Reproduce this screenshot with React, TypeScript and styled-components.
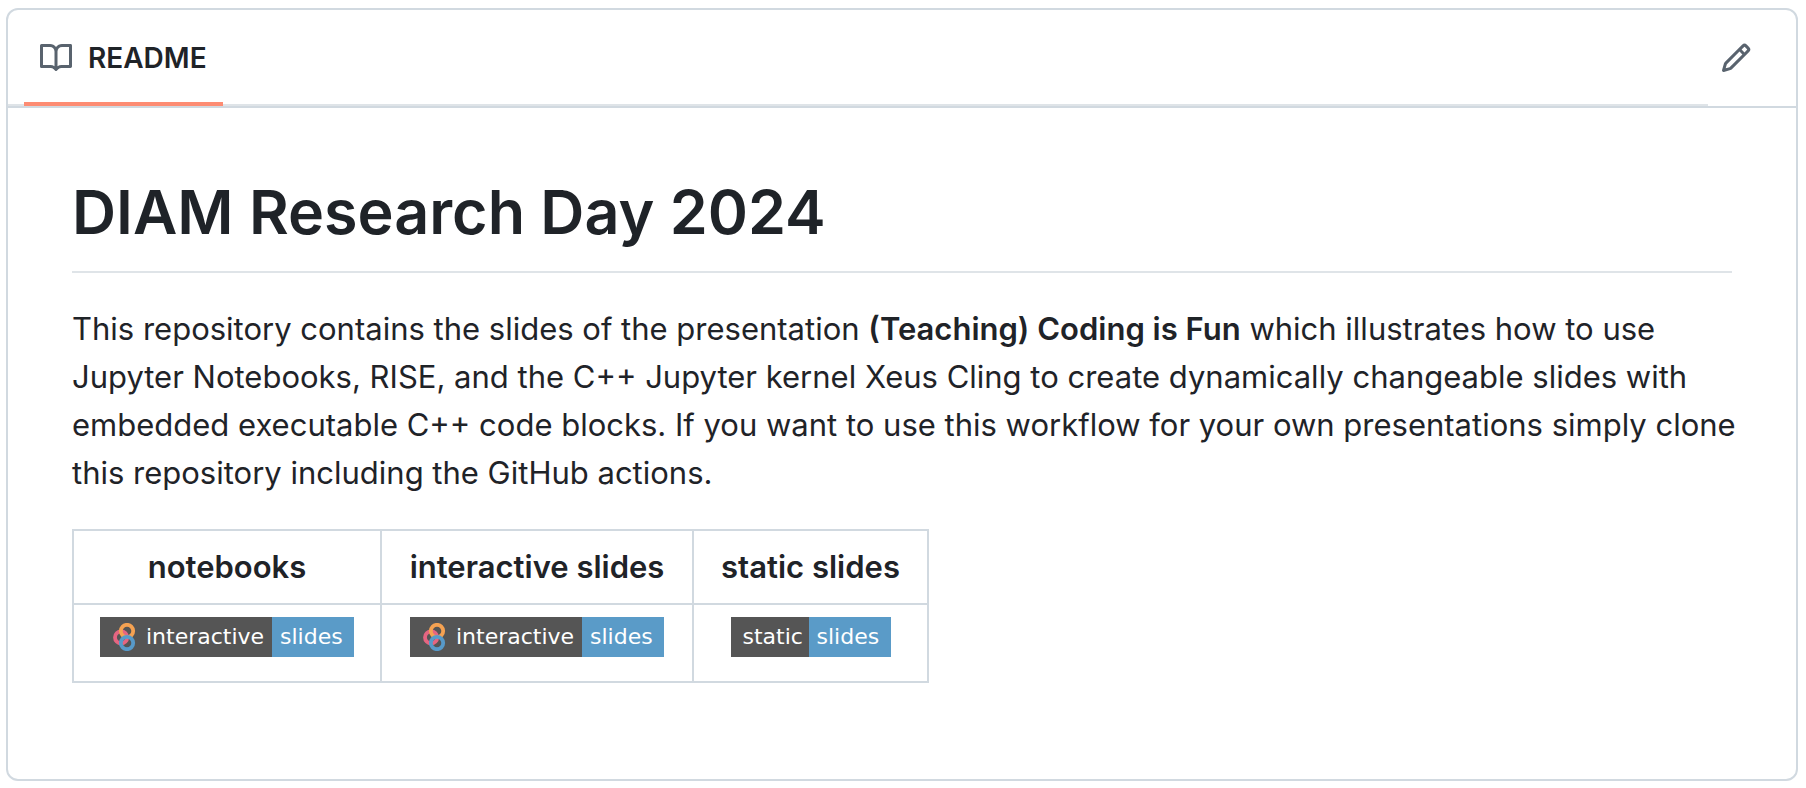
import React from "react";
import styled, { createGlobalStyle } from "styled-components";

const line = "#d1d9e0";
const ink = "#1f2328";
const muted = "#59636e";

const GlobalStyle = createGlobalStyle`
  *, *::before, *::after { box-sizing: border-box; }
  body {
    margin: 0;
    background: #fff;
    color: ${ink};
    font-family: Inter, "Liberation Sans", sans-serif;
    font-size: 31px;
    line-height: 48px;
  }
`;

const Page = styled.main`
  padding: 8px 8px 7px 6px;
`;

const Card = styled.section`
  border: 2px solid ${line};
  border-radius: 12px;
  background: #fff;
`;

const Header = styled.header`
  display: flex;
  align-items: center;
  padding-right: 32px;
  border-bottom: 2px solid ${line};
`;

const Tabs = styled.nav`
  flex: 1;
  display: flex;
  height: 96px;
  padding-left: 16px;
  box-shadow: inset 0 -2px #dfe4e8;
`;

const Tab = styled.a`
  display: flex;
  align-items: center;
  gap: 16px;
  padding: 0 16px;
  color: ${ink};
  font-size: 28px;
  font-weight: 600;
  text-decoration: none;
  box-shadow: inset 0 -4px #fd8c73;
`;

const Icon = styled.svg`
  display: block;
  width: 32px;
  height: 32px;
  fill: ${muted};
`;

const IconButton = styled.button`
  display: flex;
  align-items: center;
  justify-content: center;
  width: 56px;
  height: 56px;
  padding: 0;
  border: 0;
  border-radius: 12px;
  background: transparent;
  cursor: pointer;
`;

const Article = styled.article`
  padding: 64px 64px 96px;
`;

const Title = styled.h1`
  margin: 0 0 32px;
  padding-bottom: 19px;
  border-bottom: 2px solid #dfe4e8;
  font-size: 61px;
  font-weight: 600;
  line-height: 80px;
`;

const Paragraph = styled.p`
  margin: 0 -12px 32px 0;
`;

const Strong = styled.strong`
  font-weight: 600;
`;

const Table = styled.table`
  border-collapse: collapse;
  table-layout: fixed;
  width: 857px;
`;

const Column = styled.col<{ $width: number }>`
  width: ${(p) => p.$width}px;
`;

const HeadCell = styled.th`
  padding: 12px 0;
  border: 2px solid ${line};
  font-weight: 600;
  white-space: nowrap;
`;

const Cell = styled.td`
  padding: 12px 0 24px;
  border: 2px solid ${line};
`;

const Badge = styled.a`
  display: flex;
  width: fit-content;
  margin: 0 auto;
  color: #fff;
  font-family: Verdana, "DejaVu Sans", sans-serif;
  font-size: 22px;
  line-height: 40px;
  text-decoration: none;
`;

const BadgeLabel = styled.span<{ $width: number }>`
  display: flex;
  align-items: center;
  gap: 8px;
  width: ${(p) => p.$width}px;
  padding-left: 12px;
  background: #555;
`;

const BadgeValue = styled.span`
  width: 82px;
  padding-left: 8px;
  background: #5a9bc8;
`;

const BinderLogo = styled.svg`
  display: block;
  width: 26px;
  height: 28px;
  fill: none;
  stroke-width: 3.8;
`;

function BookIcon() {
  return (
    <Icon viewBox="0 0 16 16" aria-hidden="true">
      <path d="M0 1.75A.75.75 0 0 1 .75 1h4.253c1.227 0 2.317.59 3 1.501A3.743 3.743 0 0 1 11.006 1h4.245a.75.75 0 0 1 .75.75v10.5a.75.75 0 0 1-.75.75h-4.507a2.25 2.25 0 0 0-1.591.659l-.622.621a.75.75 0 0 1-1.06 0l-.622-.621A2.25 2.25 0 0 0 5.258 13H.75a.75.75 0 0 1-.75-.75Zm7.251 10.324.004-5.073-.002-2.253A2.25 2.25 0 0 0 5.003 2.5H1.5v9h3.757a3.75 3.75 0 0 1 1.994.574ZM8.755 4.75l-.004 7.322a3.752 3.752 0 0 1 1.992-.572H14.5v-9h-3.495a2.25 2.25 0 0 0-2.25 2.25Z" />
    </Icon>
  );
}

function PencilIcon() {
  return (
    <Icon viewBox="0 0 16 16" aria-hidden="true">
      <path d="M11.013 1.427a1.75 1.75 0 0 1 2.474 0l1.086 1.086a1.75 1.75 0 0 1 0 2.474l-8.61 8.61c-.21.21-.47.364-.756.445l-3.251.93a.75.75 0 0 1-.927-.928l.929-3.25c.081-.286.235-.547.445-.758l8.61-8.61Zm.176 4.823L9.75 4.81l-6.286 6.287a.253.253 0 0 0-.064.108l-.558 1.953 1.953-.558a.253.253 0 0 0 .108-.064Zm1.238-3.763a.25.25 0 0 0-.354 0L10.811 3.75l1.439 1.44 1.263-1.263a.25.25 0 0 0 0-.354Z" />
    </Icon>
  );
}

function InteractiveBadge() {
  return (
    <Badge href="#interactive">
      <BadgeLabel $width={172}>
        <BinderLogo viewBox="0 0 26 28" aria-hidden="true">
          <circle cx="9.1" cy="14.4" r="6.1" stroke="#e66581" />
          <circle cx="15" cy="8" r="6.2" stroke="#f5a252" />
          <circle cx="15" cy="20" r="6.2" stroke="#579aca" />
        </BinderLogo>
        interactive
      </BadgeLabel>
      <BadgeValue>slides</BadgeValue>
    </Badge>
  );
}

export default function App() {
  return (
    <>
      <GlobalStyle />
      <Page>
        <Card>
          <Header>
            <Tabs aria-label="Repository files">
              <Tab href="#readme" aria-current="page">
                <BookIcon />
                README
              </Tab>
            </Tabs>
            <IconButton type="button" aria-label="Edit file">
              <PencilIcon />
            </IconButton>
          </Header>
          <Article id="readme">
            <Title>DIAM Research Day 2024</Title>
            <Paragraph>
              This repository contains the slides of the presentation{" "}
              <Strong>(Teaching) Coding is Fun</Strong> which illustrates how to
              use Jupyter Notebooks, RISE, and the C++ Jupyter kernel Xeus Cling
              to create dynamically changeable slides with embedded executable
              C++ code blocks. If you want to use this workflow for your own
              presentations simply clone this repository including the GitHub
              actions.
            </Paragraph>
            <Table>
              <colgroup>
                <Column $width={308} />
                <Column $width={312} />
                <Column $width={235} />
              </colgroup>
              <thead>
                <tr>
                  <HeadCell scope="col">notebooks</HeadCell>
                  <HeadCell scope="col">interactive slides</HeadCell>
                  <HeadCell scope="col">static slides</HeadCell>
                </tr>
              </thead>
              <tbody>
                <tr>
                  <Cell>
                    <InteractiveBadge />
                  </Cell>
                  <Cell>
                    <InteractiveBadge />
                  </Cell>
                  <Cell>
                    <Badge href="#static">
                      <BadgeLabel $width={78}>static</BadgeLabel>
                      <BadgeValue>slides</BadgeValue>
                    </Badge>
                  </Cell>
                </tr>
              </tbody>
            </Table>
          </Article>
        </Card>
      </Page>
    </>
  );
}
